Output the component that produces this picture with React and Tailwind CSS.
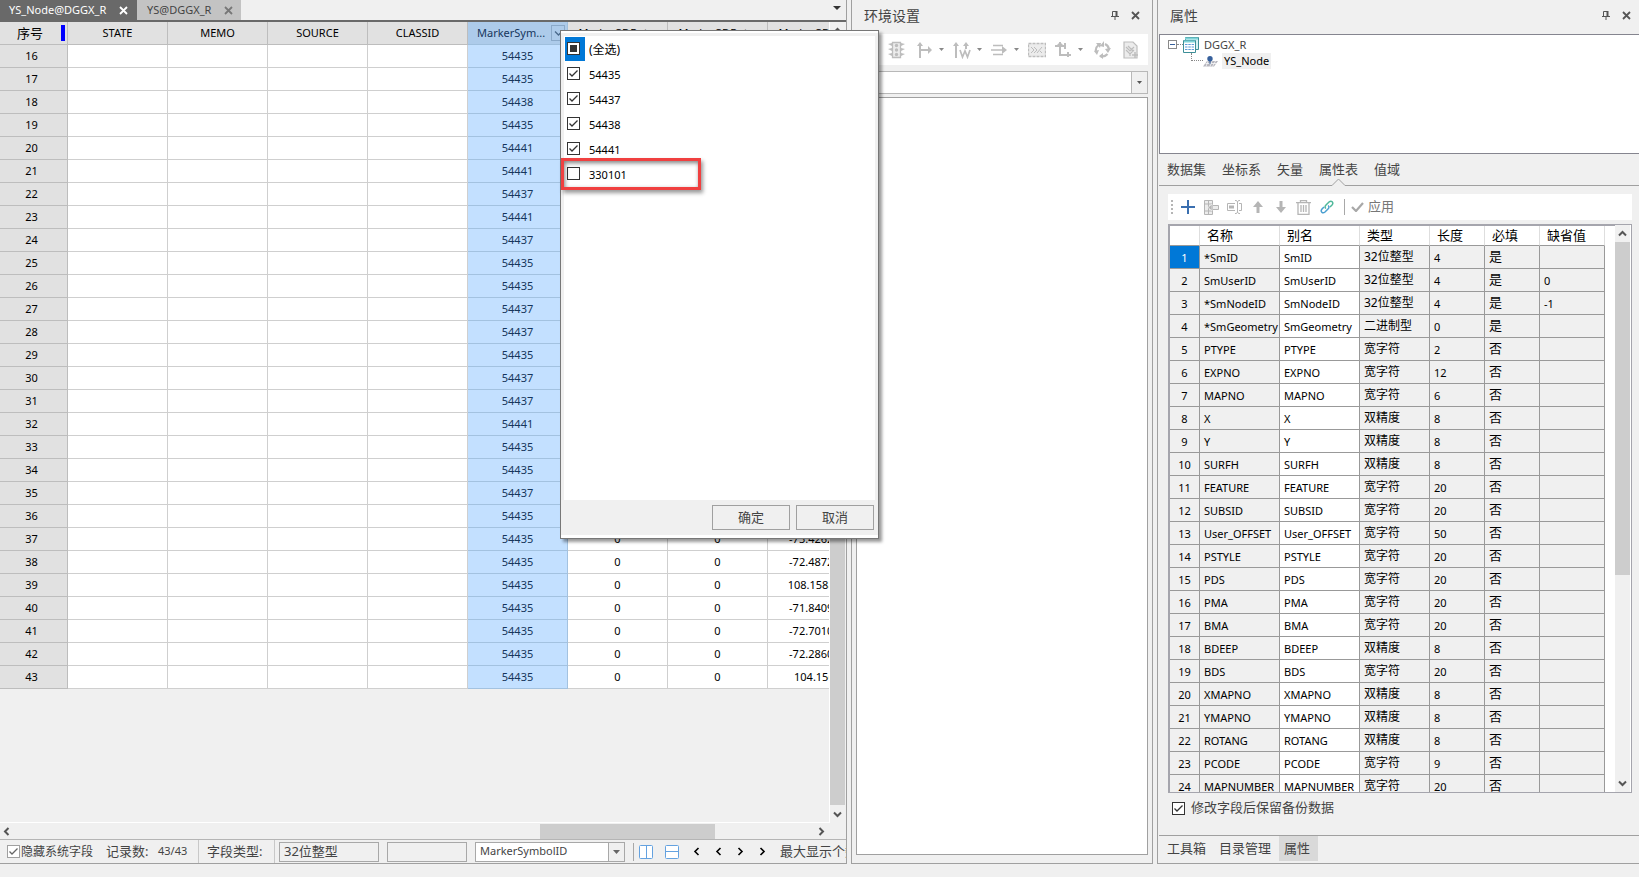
import React from 'react';
import clsx from 'clsx';

const markerIds = [
  '54435', '54435', '54438', '54435', '54441', '54441', '54437', '54441', '54437', '54435',
  '54435', '54437', '54437', '54435', '54437', '54437', '54441', '54435', '54435', '54437',
  '54435', '54435', '54435', '54435', '54435', '54435', '54435', '54435',
];

const rotations = {
  37: '-73.426214',
  38: '-72.487216',
  39: '108.158832',
  40: '-71.840951',
  41: '-72.701034',
  42: '-72.286043',
  43: '104.1565',
};

const fields = [
  ['*SmID', '32位整型', '4', '是', ''],
  ['SmUserID', '32位整型', '4', '是', '0'],
  ['*SmNodeID', '32位整型', '4', '是', '-1'],
  ['*SmGeometry', '二进制型', '0', '是', ''],
  ['PTYPE', '宽字符', '2', '否', ''],
  ['EXPNO', '宽字符', '12', '否', ''],
  ['MAPNO', '宽字符', '6', '否', ''],
  ['X', '双精度', '8', '否', ''],
  ['Y', '双精度', '8', '否', ''],
  ['SURFH', '双精度', '8', '否', ''],
  ['FEATURE', '宽字符', '20', '否', ''],
  ['SUBSID', '宽字符', '20', '否', ''],
  ['User_OFFSET', '宽字符', '50', '否', ''],
  ['PSTYLE', '宽字符', '20', '否', ''],
  ['PDS', '宽字符', '20', '否', ''],
  ['PMA', '宽字符', '20', '否', ''],
  ['BMA', '宽字符', '20', '否', ''],
  ['BDEEP', '双精度', '8', '否', ''],
  ['BDS', '宽字符', '20', '否', ''],
  ['XMAPNO', '双精度', '8', '否', ''],
  ['YMAPNO', '双精度', '8', '否', ''],
  ['ROTANG', '双精度', '8', '否', ''],
  ['PCODE', '宽字符', '9', '否', ''],
  ['MAPNUMBER', '宽字符', '20', '否', ''],
];

const Chevron = ({ dir, className = 'text-[#555]', thick = 2 }) => {
  const paths = {
    up: 'M1 6.5 4.5 3 8 6.5',
    down: 'M1 2.5 4.5 6 8 2.5',
    left: 'M6.5 1 3 4.5 6.5 8',
    right: 'M2.5 1 6 4.5 2.5 8',
  };
  return (
    <svg width="9" height="9" viewBox="0 0 9 9" className={className} fill="none" stroke="currentColor" strokeWidth={thick}>
      <path d={paths[dir]} />
    </svg>
  );
};

const Caret = ({ className }) => (
  <svg width="5" height="3" viewBox="0 0 5 3" className={clsx('shrink-0', className)} fill="currentColor">
    <path d="M0 0h5L2.5 3z" />
  </svg>
);

const CloseX = ({ className }) => (
  <svg width="9" height="9" viewBox="0 0 9 9" className={className} fill="none" stroke="currentColor" strokeWidth="1.8">
    <path d="M1 1l7 7M8 1L1 8" />
  </svg>
);

const CheckBox = ({ id, label, checked, partial, muted }) => (
  <span className="grid size-[13px] shrink-0">
    <input
      id={id}
      type="checkbox"
      aria-label={label}
      defaultChecked={checked}
      className={clsx(
        'col-start-1 row-start-1 size-[13px] appearance-none border bg-white',
        muted ? 'border-[#a0a0a0]' : 'border-[#333]'
      )}
    />
    <svg width="13" height="13" viewBox="0 0 13 13" className="pointer-events-none col-start-1 row-start-1" fill="none">
      {checked && <path d="M2.5 6.5 5 9l5.5-5.5" stroke={muted ? '#666' : '#333'} strokeWidth="1.3" />}
      {partial && <path d="M3 3h7v7H3z" fill="#333" />}
    </svg>
  </span>
);

const PanelTitle = ({ children, className }) => (
  <div className={clsx('flex h-[34px] shrink-0 items-center pb-[3px] text-[#444]', className)}>
    <h2 className="flex-1 text-[14px] leading-5">{children}</h2>
    <button aria-label="固定" className="mr-3 text-[#555]">
      <svg width="8" height="9" viewBox="0 0 8 9" fill="none" stroke="currentColor">
        <path d="M1.5 5V.5h4V5M0 5.5h8M4 6v3" />
        <path d="M5.5 0v5" strokeWidth="2" />
      </svg>
    </button>
    <button aria-label="关闭" className="text-[#555]"><CloseX /></button>
  </div>
);

const AttributeTable = () => {
  const headers = ['STATE', 'MEMO', 'SOURCE', 'CLASSID', 'MarkerSym...', 'Marker3DRot...', 'Marker3DRot...', 'Marker3DRot...'];
  return (
    <table className="w-[868px] table-fixed border-separate border-spacing-0 text-center text-[11px] leading-4">
      <colgroup>
        <col className="w-[68px]" />
        {headers.map((h, i) => <col key={i} className="w-[100px]" />)}
      </colgroup>
      <thead>
        <tr className="h-[23px]">
          <th className="border-r border-b border-[#bdbdbd] bg-[#e1e1e1] p-0 font-normal">
            <span className="flex items-center justify-end gap-[18px] pr-[2px]">
              <span className="text-[13px]">序号</span>
              <span className="h-4 w-1 bg-[#0000ff]" />
            </span>
          </th>
          {headers.map((h, i) => (
            <th
              key={i}
              className={clsx(
                'border-r border-b p-0 font-normal whitespace-nowrap',
                i === 4 ? 'border-[#9fbfdd] bg-[#adcbea] text-[#16365c]' : 'border-[#bdbdbd] bg-[#e1e1e1]'
              )}
            >
              {i === 4 ? (
                <span className="flex items-center justify-between pr-[2px] pl-[9px]">
                  {h}
                  <button aria-label="筛选" className="flex h-4 w-[14px] items-center justify-center border border-[#8aa9c9]">
                    <Chevron dir="down" thick={1.3} className="text-[#4a6a8c]" />
                  </button>
                </span>
              ) : h}
            </th>
          ))}
        </tr>
      </thead>
      <tbody>
        {markerIds.map((id, i) => {
          const n = i + 16;
          return (
            <tr key={n} className="h-[23px]">
              <th className="border-r border-b border-[#bdbdbd] bg-[#e1e1e1] p-0 pr-1 font-normal">{n}</th>
              {[0, 1, 2, 3].map((c) => <td key={c} className="border-r border-b border-[#cfcfcf] bg-white p-0" />)}
              <td className="border-r border-b border-[#a3c2e0] bg-[#c3e0ff] p-0 text-[#16365c]">{id}</td>
              <td className="border-r border-b border-[#cfcfcf] bg-white p-0">0</td>
              <td className="border-r border-b border-[#cfcfcf] bg-white p-0">0</td>
              <td className="border-r border-b border-[#cfcfcf] bg-white p-0">{rotations[n]}</td>
            </tr>
          );
        })}
      </tbody>
    </table>
  );
};

const StatusBar = () => (
  <div className="flex h-[24px] shrink-0 items-center overflow-hidden border-t border-[#b5b5b5] text-[#444] whitespace-nowrap">
    <label className="ml-[7px] flex w-[99px] shrink-0 items-center gap-px text-[12px]">
      <CheckBox checked muted />
      隐藏系统字段
    </label>
    <span className="w-[52px] shrink-0 text-[13px]">记录数:</span>
    <span className="w-[40px] shrink-0 text-[11px]">43/43</span>
    <span className="h-full w-px shrink-0 bg-[#c8c8c8]" />
    <label htmlFor="ftype" className="ml-2 w-[67px] shrink-0 text-[13px]">字段类型:</label>
    <span className="h-full w-px shrink-0 bg-[#c8c8c8]" />
    <input id="ftype" readOnly defaultValue="32位整型" className="ml-1 h-5 w-[100px] shrink-0 border border-[#a8a8a8] px-1 pb-[2px] text-[13px]" />
    <input aria-label="字段值" readOnly className="ml-2 h-5 w-[80px] shrink-0 border border-[#a8a8a8]" />
    <div className="ml-2 flex h-5 w-[150px] shrink-0 border border-[#a8a8a8] bg-white">
      <select aria-label="字段" className="min-w-0 flex-1 appearance-none px-1 text-[11px]">
        <option>MarkerSymbolID</option>
      </select>
      <span className="flex w-4 items-center justify-center border-l border-[#a8a8a8] bg-[#f0f0f0]">
        <svg width="7" height="4" viewBox="0 0 7 4"><path d="M0 0h7L3.500 4z" fill="#666" /></svg>
      </span>
    </div>
    <span className="ml-2 h-[18px] w-px shrink-0 bg-[#a8a8a8]" />
    <button aria-label="左右分屏" className="ml-[5px] shrink-0">
      <svg width="14" height="14" viewBox="0 0 14 14" fill="#fff" stroke="#64a2e0"><rect x=".5" y=".5" width="13" height="13" rx="1" /><path d="M7.500 1v12" /></svg>
    </button>
    <button aria-label="上下分屏" className="ml-3 shrink-0">
      <svg width="14" height="14" viewBox="0 0 14 14" fill="#fff" stroke="#64a2e0"><rect x=".5" y=".5" width="13" height="13" rx="1" /><path d="M1 6.500h12" /></svg>
    </button>
    <span className="ml-[13px] flex shrink-0 gap-[13px]">
      {['left', 'left', 'right', 'right'].map((d, i) => (
        <button key={i} aria-label={`${d}-${i}`}><Chevron dir={d} thick={1.6} className="text-black" /></button>
      ))}
    </span>
    <span className="ml-[13px] text-[13px]">最大显示个数</span>
  </div>
);

const FilterPopup = () => (
  <div className="absolute top-[30px] left-[560px] flex h-[509px] w-[319px] flex-col border border-[#777] bg-[#f0f0f0] shadow-[3px_3px_3px_rgba(0,0,0,0.4)]">
    <div className="h-[2px] shrink-0 bg-white" />
    <div className="mx-[3px] mt-[3px] flex-1 bg-white pt-px pl-px text-[11px] leading-4">
      {[['(全选)', false], ['54435', true], ['54437', true], ['54438', true], ['54441', true], ['330101', false]].map(([text, on], i) => (
        <label key={text} className="flex h-[25px] items-start gap-1">
          <span className={clsx('flex h-6 w-5 items-start pt-[5px] pl-[2px]', i === 0 && 'bg-[#0078d7]')}>
            <CheckBox checked={on} partial={i === 0} />
          </span>
          <span className={clsx('pt-[5px]', i === 0 && 'text-[12px]')}>{text}</span>
        </label>
      ))}
    </div>
    <div className="flex h-[35px] shrink-0 items-center justify-end gap-[6px] pr-1 text-[13px] text-[#444]">
      <button className="h-[25px] w-[78px] border border-[#a0a0a0]">确定</button>
      <button className="h-[25px] w-[78px] border border-[#a0a0a0]">取消</button>
    </div>
    <div className="h-[3px] shrink-0 bg-white" />
    <div className="absolute top-[127px] left-0 h-[32px] w-[140px] border-3 border-[#f04040] shadow-[inset_1px_2px_4px_rgba(0,0,0,0.5),2px_3px_4px_rgba(0,0,0,0.4)]" />
  </div>
);

const EnvToolbar = () => (
  <div className="flex h-[31px] shrink-0 items-center justify-end bg-white pr-[10px] text-[#bdbdbd]">
    <svg width="17" height="18" viewBox="0 0 17 18" fill="currentColor" className="mr-3">
      <path d="M0 3l4-1v3zM0 8l4-1v3zM0 13l4-1v3zM17 3l-4-1v3zM17 8l-4-1v3zM17 13l-4-1v3z" />
      <path d="M4.500 1.500h8v15h-8z" fill="#ececec" stroke="currentColor" strokeWidth="1.300" />
      <circle cx="8.500" cy="4.500" r="1.700" /><circle cx="8.500" cy="9" r="1.700" /><circle cx="8.500" cy="13.500" r="1.700" />
    </svg>
    <svg width="16" height="18" viewBox="0 0 16 18" className="mr-[6px]" fill="none" stroke="currentColor" strokeWidth="2">
      <path d="M3 17V3M3 9h9" /><path d="M0 5l3-4 3 4zM11 5l4 4-4 4z" fill="currentColor" stroke="none" />
    </svg>
    <Caret className="mr-[9px] text-[#888]" />
    <svg width="18" height="18" viewBox="0 0 18 18" className="mr-[6px]" fill="none" stroke="currentColor" strokeWidth="2">
      <path d="M3 17V3M13 8V3" /><path d="M0 5l3-4 3 4zM10 5l3-4 3 4z" fill="currentColor" stroke="none" />
      <path d="M7 9l2.500 7L12 10l2.500 6L17 9" strokeWidth="1.700" />
    </svg>
    <Caret className="mr-[9px] text-[#888]" />
    <svg width="17" height="18" viewBox="0 0 17 18" className="mr-[6px]" fill="none" stroke="currentColor" strokeWidth="1.500">
      <path d="M2 4.500h10M0 9h12M2 13.500h10" /><path d="M11 5l5 4-5 4z" fill="currentColor" stroke="none" />
    </svg>
    <Caret className="mr-[9px] text-[#888]" />
    <svg width="18" height="16" viewBox="0 0 18 16" className="mr-[9px]" fill="#ececec" stroke="currentColor">
      <path d="M.5 1.500h17v13H.5z" strokeDasharray="3 1" strokeWidth="1.300" />
      <path d="M3 5l3 3-3 3M6 5l3 3-3 3M9 11l5-6M12 9l2 2" fill="none" />
    </svg>
    <svg width="17" height="18" viewBox="0 0 17 18" className="mr-[6px]" fill="none" stroke="currentColor" strokeWidth="2">
      <path d="M5 1v13h11M0 5h10M10 2v6M13 11v5" /><path d="M2 4l3-3 3 3z" fill="currentColor" stroke="none" />
    </svg>
    <Caret className="mr-[11px] text-[#888]" />
    <svg width="17" height="18" viewBox="0 0 17 18" className="mr-3" fill="none" stroke="currentColor" strokeWidth="2.200">
      <path d="M2 11A7 7 0 0 1 4.500 4M11 3a7 7 0 0 1 4 5M13.500 13A7 7 0 0 1 6 15" />
      <path d="M2 2l5 0-1 5zM10 0v6l-4-1zM17 7l-3 5-3-4zM9 12v6l-4-3zM0 10l5-1-2 5z" fill="currentColor" stroke="none" />
    </svg>
    <svg width="15" height="18" viewBox="0 0 15 18" fill="#ececec" stroke="currentColor" strokeWidth="1.200">
      <path d="M1 1h9l4 4v12H1z" /><path d="M3 6l4 4 4-4M3 9l4 4 4-4M5 5l5 5M7 13v2" fill="none" /><path d="M9 14h6M12 11v6" strokeWidth="1.500" />
    </svg>
  </div>
);

const TreeBox = () => (
  <div className="h-[120px] shrink-0 border border-r-0 border-[#85858f] bg-white pt-px text-[11px] leading-4 text-[#444]">
    <div className="flex h-[17px] items-center pl-2">
      <svg width="9" height="9" viewBox="0 0 9 9" fill="#fff" stroke="#8a8a8a"><rect x=".5" y=".5" width="8" height="8" /><path d="M2 4.500h5" stroke="#36609c" /></svg>
      <span className="w-[6px] border-t border-dotted border-[#888]" />
      <svg width="16" height="16" viewBox="0 0 16 16" fill="#fff">
        <path d="M2.500.5h13v12h-13z" fill="#d6f1f3" stroke="#3d8f98" /><path d="M2 1.500h13" stroke="#7fd3d8" strokeWidth="2" />
        <path d="M.5 3.500h12v12H.5z" stroke="#3d8f98" /><path d="M1 4.500h11" stroke="#7fd3d8" strokeWidth="2" />
        <path d="M2 7.500h9M2 10h9M2 12.500h9" stroke="#5d9bd8" strokeDasharray="2.500 .8" />
      </svg>
      <span className="ml-[5px]">DGGX_R</span>
    </div>
    <div className="flex h-4 items-center pl-[31px]">
      <span className="mb-2 h-2 w-3 border-b border-l border-dotted border-[#888]" />
      <svg width="15" height="11" viewBox="0 0 15 11">
        <path d="M4 5h11l-4 5.500H0z" fill="#b5b5bd" /><path d="M2.500 7.500h11M5 5l-2 5.500M9 5l-2 5.500M12.500 5l-3 5.500" stroke="#fff" strokeWidth=".7" />
        <path d="M7 3v5" stroke="#36609c" /><circle cx="7" cy="2.700" r="2.700" fill="#36609c" />
      </svg>
      <span className="ml-1 bg-[#f0f0f0] px-[2px] text-black">YS_Node</span>
    </div>
  </div>
);

const FieldToolbar = () => (
  <div className="ml-[9px] mr-[7px] mt-2 flex h-[26px] shrink-0 items-center bg-white pl-[3px] text-[#b5b5b5]">
    <svg width="2" height="14" viewBox="0 0 2 14" fill="currentColor"><path d="M0 0h2v2H0zM0 4h2v2H0zM0 8h2v2H0zM0 12h2v2H0z" /></svg>
    <button aria-label="添加" className="ml-2 text-[#3a6fb0]">
      <svg width="14" height="14" viewBox="0 0 14 14" stroke="currentColor" strokeWidth="2"><path d="M7 0v14M0 7h14" /></svg>
    </button>
    <button aria-label="插入" className="ml-[9px]">
      <svg width="16" height="15" viewBox="0 0 16 15" fill="#ececec" stroke="currentColor"><path d="M.5.5h8v14h-8zM.5 4h8M.5 11h8M4.500.5v14" /><path d="M8.500 5.500h6v4h-6z" /><path d="M8 4v7L4 7.500z" fill="#b5b5b5" stroke="#fff" strokeWidth=".5" /></svg>
    </button>
    <button aria-label="修改" className="ml-[7px]">
      <svg width="15" height="14" viewBox="0 0 15 14" fill="none" stroke="currentColor"><path d="M8 3.500H.5v7H8" /><path d="M2 5.500h5v3H2z" fill="currentColor" stroke="none" /><path d="M8 .5h1.500L10.500 2l1-1.500H13M10.500 2v10M8 13.500h1.500l1-1.500 1 1.500H13M12 3.500h2.500v7H12" /></svg>
    </button>
    <button aria-label="上移" className="ml-[11px]">
      <svg width="10" height="12" viewBox="0 0 10 12" fill="currentColor"><path d="M5 0l5 6H6.500v6h-3V6H0z" /></svg>
    </button>
    <button aria-label="下移" className="ml-[13px]">
      <svg width="10" height="12" viewBox="0 0 10 12" fill="currentColor"><path d="M5 12l5-6H6.500V0h-3v6H0z" /></svg>
    </button>
    <button aria-label="删除" className="ml-[10px]">
      <svg width="15" height="15" viewBox="0 0 15 15" fill="none" stroke="currentColor" strokeWidth="1.300"><path d="M0 2.700h15M4.500 2.500V.7h6v1.800M2 3v11.300h11V3M5 5v7M7.500 5v7M10 5v7" /></svg>
    </button>
    <button aria-label="关联" className="ml-[9px]">
      <svg width="14" height="14" viewBox="0 0 14 14" fill="none" strokeWidth="1.500">
        <path d="M6 8.500C4.500 7.500 5 6 6 5L9 2c2.500-2 5 .5 3 3l-2 2" stroke="#4fb89a" /><path d="M8 5.500C9.500 6.500 9 8 8 9l-3 3c-2.500 2-5-.5-3-3l2-2" stroke="#4a9fd0" />
      </svg>
    </button>
    <span className="ml-[10px] h-4 w-px bg-[#a8a8a8]" />
    <button className="ml-[6px] flex items-center gap-1 text-[13px] text-[#777]">
      <svg width="13" height="10" viewBox="0 0 13 10" fill="none" stroke="#a8a8a8" strokeWidth="2.200"><path d="M1 5l4 4 7-8" /></svg>
      应用
    </button>
  </div>
);

const FieldTable = () => (
  <div className="ml-[9px] mr-[7px] mt-1 flex min-h-0 flex-1 overflow-hidden border border-[#a5a5ad] bg-white">
    <div className="min-w-0 flex-1 overflow-hidden border-t border-l border-[#a5a5ad]">
      <table className="w-[435px] table-fixed border-separate border-spacing-0 text-left text-[11px] leading-4">
        <colgroup>
          <col className="w-[30px]" /><col className="w-[80px]" /><col className="w-[80px]" /><col className="w-[70px]" />
          <col className="w-[55px]" /><col className="w-[55px]" /><col className="w-[65px]" />
        </colgroup>
        <thead>
          <tr className="h-[20px]">
            <th className="border-r border-b border-r-[#dedede] border-b-[#999] p-0" />
            {['名称', '别名', '类型', '长度', '必填', '缺省值'].map((h) => (
              <th key={h} className="border-r border-b border-r-[#dedede] border-b-[#999] p-0 pb-[2px] pl-[7px] text-[13px] font-normal">{h}</th>
            ))}
          </tr>
        </thead>
        <tbody>
          {fields.map(([name, type, len, req, def], i) => (
            <tr key={name} className="h-[23px] bg-[#f0f0f0]">
              <th className={clsx('border-r border-b border-[#999] p-0 pt-[2px] text-center font-normal', i === 0 && 'bg-[#0078d7] text-white')}>{i + 1}</th>
              <td className="border-r border-b border-[#999] p-0 pt-[2px] pl-1">{name}</td>
              <td className="border-r border-b border-[#999] bg-white p-0 pt-[2px] pl-1">{name.replace('*', '')}</td>
              <td className="border-r border-b border-[#999] p-0 pl-1 text-[12px]">{type}</td>
              <td className="border-r border-b border-[#999] p-0 pt-[2px] pl-1">{len}</td>
              <td className="border-r border-b border-[#999] p-0 pb-[2px] pl-1 text-[13px]">{req}</td>
              <td className="border-r border-b border-[#999] p-0 pt-[2px] pl-1">{def}</td>
            </tr>
          ))}
        </tbody>
      </table>
    </div>
    <div className="mr-px flex w-[15px] shrink-0 flex-col items-center bg-[#f0f0f0]">
      <span className="flex h-[17px] items-center"><Chevron dir="up" /></span>
      <span className="h-[333px] w-full bg-[#cdcdcd]" />
      <span className="mt-auto flex h-[17px] items-center"><Chevron dir="down" /></span>
    </div>
  </div>
);

const App = () => (
  <div
    className="relative grid h-screen grid-cols-[847fr_302fr_482fr] grid-rows-[minmax(0,1fr)] gap-1 overflow-hidden bg-[#f0f0f0] pb-[13px] text-black"
    style={{ fontFamily: "'Noto Sans', 'Noto Sans CJK SC', sans-serif" }}
  >
    <section className="flex min-w-0 flex-col border-r border-b border-[#a0a0a0]">
      <div className="flex h-[22px] shrink-0 border-b-2 border-[#696969] text-[11px]">
        <div className="flex w-[137px] items-center justify-between bg-[#696969] pr-[9px] pl-[9px] text-white">
          YS_Node@DGGX_R<button aria-label="关闭"><CloseX /></button>
        </div>
        <div className="flex w-[104px] items-center justify-between bg-[#c3c3c3] pr-2 pl-[10px] text-[#444]">
          YS@DGGX_R<button aria-label="关闭" className="text-[#777]"><CloseX /></button>
        </div>
        <button aria-label="更多" className="mr-[5px] mb-1 ml-auto">
          <svg width="8" height="4" viewBox="0 0 8 4"><path d="M0 0h8L4 4z" fill="#333" /></svg>
        </button>
      </div>
      <div className="flex min-h-0 flex-1">
        <div className="min-w-0 flex-1 overflow-hidden border-r border-b border-white">
          <AttributeTable />
        </div>
        <div className="mr-px flex w-[15px] shrink-0 flex-col items-center">
          <span className="flex h-[17px] items-center"><Chevron dir="up" /></span>
          <span className="w-full flex-1 bg-[#cdcdcd]" />
          <span className="flex h-[18px] items-center"><Chevron dir="down" /></span>
        </div>
      </div>
      <div className="flex h-4 shrink-0 items-center pr-5 pl-[2px]">
        <Chevron dir="left" />
        <span className="mr-auto ml-[529px] h-[15px] w-[175px] bg-[#cdcdcd]" />
        <Chevron dir="right" />
      </div>
      <StatusBar />
    </section>

    <section className="flex min-w-0 flex-col border-x border-b border-[#a0a0a0] px-1 pb-2">
      <PanelTitle className="pl-2 pr-2">环境设置</PanelTitle>
      <EnvToolbar />
      <div className="mt-[6px] flex h-[23px] shrink-0 border border-[#b8b8b8] bg-white">
        <select aria-label="网络数据集" className="min-w-0 flex-1 appearance-none"><option /></select>
        <span className="flex w-4 items-center justify-center border-l border-[#b8b8b8] bg-[#f0f0f0]"><Caret className="text-[#555]" /></span>
      </div>
      <div className="mt-[3px] flex-1 border border-[#a0a0a0] bg-white" />
    </section>

    <section className="flex min-w-0 flex-col border-b border-l border-[#a0a0a0] pl-px">
      <PanelTitle className="pr-2 pl-[11px]">属性</PanelTitle>
      <TreeBox />
      <div className="flex h-8 shrink-0 items-center gap-4 border-b border-[#a0a0a0] pl-2 text-[13px] text-[#444]">
        {['数据集', '坐标系', '矢量', '属性表', '值域'].map((t) => (
          <button key={t} className="relative h-full">
            {t}
            {t === '属性表' && (
              <svg width="13" height="8" viewBox="0 0 13 8" className="absolute -bottom-px left-[13px]">
                <path d="M0 7.500 6.500 1 13 7.500V8H0z" fill="#f0f0f0" /><path d="M0 7.500 6.500 1 13 7.500" fill="none" stroke="#a0a0a0" />
              </svg>
            )}
          </button>
        ))}
      </div>
      <FieldToolbar />
      <FieldTable />
      <label className="ml-[13px] flex h-[30px] shrink-0 items-center gap-[6px] text-[13px] text-[#444]">
        <CheckBox checked />
        修改字段后保留备份数据
      </label>
      <div className="mt-3 flex h-7 shrink-0 items-start border-t border-[#a0a0a0] text-[13px] text-[#444]">
        <button className="ml-2 h-[25px]">工具箱</button>
        <button className="ml-[13px] h-[25px]">目录管理</button>
        <button className="ml-2 h-[25px] w-[39px] bg-[#d9d9d9] pr-[3px]">属性</button>
      </div>
    </section>

    <FilterPopup />
  </div>
);

export default App;
